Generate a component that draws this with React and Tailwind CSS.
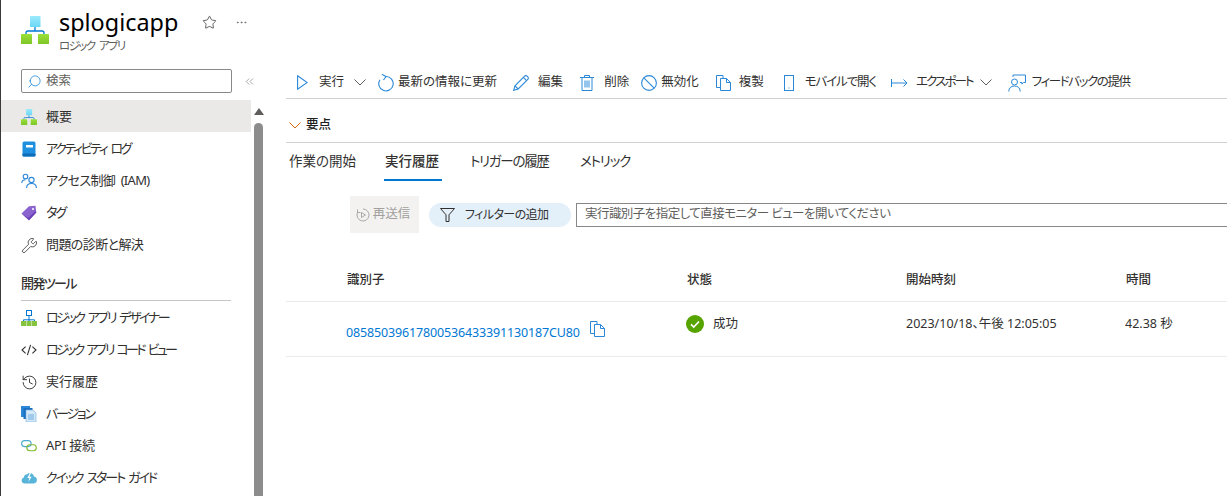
import React from 'react';
import { Star, Ellipsis, ChevronsLeft, Search, Wrench, History } from 'lucide-react';

const blue = '#0078d4';
const iconBlue = '#2b88d8';

const LogicIcon = ({ size = 28, id = 'a' }) => (
  <svg width={size} height={size} viewBox="0 0 28 28" className="shrink-0">
    <defs>
      <linearGradient id={`top-${id}`} x1="0" y1="0" x2="0" y2="1">
        <stop offset="0" stopColor="#9deafc" />
        <stop offset="1" stopColor="#6bd7f6" />
      </linearGradient>
      <linearGradient id={`bottom-${id}`} x1="0" y1="0" x2="0" y2="1">
        <stop offset="0" stopColor="#9ae03a" />
        <stop offset="1" stopColor="#7cc427" />
      </linearGradient>
    </defs>
    <path d="M14 11v4M5 19v-2a2 2 0 0 1 2-2h14a2 2 0 0 1 2 2v2" fill="none" stroke={blue} strokeWidth="1.3" />
    <rect x="9" y="0" width="10.500" height="11" rx="0.6" fill={`url(#top-${id})`} />
    <rect x="0" y="18" width="11" height="10.500" rx="0.6" fill={`url(#bottom-${id})`} />
    <rect x="17" y="18" width="11" height="10.500" rx="0.6" fill={`url(#bottom-${id})`} />
  </svg>
);

const LogIcon = () => (
  <svg width="14" height="16" viewBox="0 0 14 16" className="shrink-0">
    <rect x="0.5" y="0.5" width="13" height="15" rx="1.5" fill="#1f8fe0" />
    <rect x="0.5" y="12.5" width="13" height="3" rx="1" fill="#0f6cb8" />
    <rect x="4" y="4" width="7" height="2.5" fill="#fff" />
  </svg>
);

const PeopleIcon = () => (
  <svg width="16" height="16" viewBox="0 0 16 16" fill="none" stroke="#2a86d8" strokeWidth="1.1" className="shrink-0">
    <circle cx="4.500" cy="3.500" r="2.300" />
    <path d="M0.800 10c0-2 1.500-3.300 3.700-3.300" />
    <circle cx="10.500" cy="7" r="2.600" />
    <path d="M5.600 15c0-2.800 2-4.500 4.900-4.500s4.900 1.700 4.900 4.500" />
  </svg>
);

const TagIcon = () => (
  <svg width="16" height="16" viewBox="0 0 16 16" className="shrink-0">
    <path d="M0.500 8.500 8 1.200l6.500-.4.800 6.600L8 15.200z" fill="#8a63cf" />
    <path d="M0.500 8.500 8 15.200l7.300-7.800-1-1.200L7.300 13z" fill="#6a3fb5" />
    <circle cx="12" cy="4" r="1" fill="#fff" />
  </svg>
);

const DesignerIcon = () => (
  <svg width="16" height="16" viewBox="0 0 16 16" className="shrink-0">
    <path d="M8 6v3M2.500 12V9.800h11V12M8 9v3" fill="none" stroke={blue} strokeWidth="1" />
    <rect x="5.500" y="0.500" width="5" height="5" fill="#fff" stroke={blue} />
    <rect x="0" y="11" width="5" height="5" fill="#86c440" />
    <rect x="5.500" y="11" width="5" height="5" fill="#86c440" />
    <rect x="11" y="11" width="5" height="5" fill="#86c440" />
  </svg>
);

const CodeIcon = () => (
  <svg width="16" height="16" viewBox="0 0 16 16" fill="none" stroke="#323130" strokeWidth="1.100" className="shrink-0">
    <path d="M4.600 4.600 1 8l3.600 3.400M11.400 4.600 15 8l-3.600 3.400M9.600 2.800 6.400 13.200" />
  </svg>
);

const VersionIcon = () => (
  <svg width="16" height="16" viewBox="0 0 16 16" className="shrink-0">
    <rect x="0" y="0" width="9" height="11" fill="#2b88d8" />
    <rect x="2.500" y="2" width="9" height="11" fill="#1d6fc0" />
    <path d="M5 4h7l3 3v9H5z" fill="#d4e8f8" stroke="#72b3e8" strokeWidth="0.600" />
    <path d="M7 9h6M7 11h6M7 13h6" stroke="#5ea6de" strokeWidth="0.900" />
  </svg>
);

const ApiIcon = () => (
  <svg width="16" height="16" viewBox="0 0 16 16" fill="none" strokeWidth="1.100" className="shrink-0">
    <rect x="0.600" y="2.600" width="9.500" height="6" rx="3" stroke="#4aa9c9" />
    <rect x="5.800" y="6.800" width="9.500" height="6" rx="3" stroke="#7fba2e" />
  </svg>
);

const CloudIcon = () => (
  <svg width="16" height="16" viewBox="0 0 16 16" className="shrink-0">
    <path d="M3.400 13.500a3 3 0 0 1-.6-5.900 3.600 3.600 0 0 1 3.300-3.300A4 4 0 0 1 13 6.400a3.600 3.600 0 0 1-.2 7.100z" fill="#59b4d9" />
    <path d="M8.800 3 6.400 8h2l-1 4 3.200-5.200H8.400L10 3z" fill="#fff" />
  </svg>
);

const PlayIcon = () => (
  <svg width="11" height="15" viewBox="0 0 11 15" fill="none" stroke={iconBlue} strokeWidth="1.100" className="shrink-0">
    <path d="M.6.8 10.200 7.500.6 14.200z" />
  </svg>
);

const RefreshIcon = () => (
  <svg width="16" height="18" viewBox="0 0 16 18" fill="none" stroke={iconBlue} strokeWidth="1.100" className="shrink-0">
    <path d="M8 2.500a7.200 7.200 0 1 1-6 3.200" />
    <path d="M3.800.3 8 2.500 5.500 6" />
  </svg>
);

const PencilIcon = () => (
  <svg width="16" height="16" viewBox="0 0 16 16" fill="none" stroke={iconBlue} strokeWidth="1.100" className="shrink-0">
    <path d="M.7 15.300 2 10.800 11.600 1.200a1.800 1.800 0 0 1 2.600 0l.6.600a1.800 1.800 0 0 1 0 2.600L5.200 14z" />
    <path d="M2 10.800 5.200 14M10.400 2.400l3.200 3.200" />
  </svg>
);

const TrashIcon = () => (
  <svg width="14" height="16" viewBox="0 0 14 16" fill="none" stroke={iconBlue} strokeWidth="1" className="shrink-0">
    <path d="M0 2.500h14M4.500 2.500V.5h5v2M2 2.500v13h10v-13M5 5.500v7M7 5.500v7M9 5.500v7" />
  </svg>
);

const BanIcon = () => (
  <svg width="16" height="16" viewBox="0 0 16 16" fill="none" stroke={iconBlue} strokeWidth="1.100" className="shrink-0">
    <circle cx="8" cy="8" r="7.400" />
    <path d="M2.800 2.800 13.200 13.200" />
  </svg>
);

const CopyIcon = () => (
  <svg width="15" height="16" viewBox="0 0 15 16" fill="none" stroke={iconBlue} strokeWidth="1" className="shrink-0">
    <path d="M4.500 12.500h-4V.5H7v3" />
    <path d="M4.500 3.500h6l4 4v8h-10z" />
    <path d="M10.500 3.500v4h4" />
  </svg>
);

const MobileIcon = () => (
  <svg width="10" height="16" viewBox="0 0 10 16" fill="none" stroke={iconBlue} strokeWidth="1" className="shrink-0">
    <rect x="0.500" y="0.500" width="9" height="15" />
    <path d="M4.500 13h1" />
  </svg>
);

const ExportIcon = () => (
  <svg width="17" height="10" viewBox="0 0 17 10" fill="none" stroke={iconBlue} strokeWidth="1" className="shrink-0">
    <path d="M0.500 1v8M1 5h15M12.500 1.500 16 5l-3.500 3.500" />
  </svg>
);

const FeedbackIcon = () => (
  <svg width="18" height="18" viewBox="0 0 18 18" fill="none" stroke={iconBlue} strokeWidth="1" className="shrink-0">
    <path d="M5 3V1h12.500v7.500h-2l-1.600 1.600V8.500H12" />
    <circle cx="6.500" cy="8" r="3" />
    <path d="M.8 17.500c0-3.500 2.200-5.500 5.700-5.500s5.700 2 5.700 5.500" />
  </svg>
);

const FilterIcon = () => (
  <svg width="15" height="14" viewBox="0 0 15 14" fill="none" stroke="#323130" strokeWidth="1" className="shrink-0">
    <path d="M.5.500h14L9 6.800v6.700H6V6.800z" />
  </svg>
);

const ChevronIcon = ({ color = '#605e5c' }) => (
  <svg width="12" height="7" viewBox="0 0 12 7" fill="none" stroke={color} strokeWidth="1" className="shrink-0">
    <path d="M.5.500 6 6 11.500.5" />
  </svg>
);

const menuTop = [
  { label: '概要', icon: <LogicIcon size={16} id="b" />, active: true },
  { label: 'アクティビティ ログ', icon: <LogIcon />, text: 'tracking-[-2.4px] [word-spacing:3px]' },
  { label: 'アクセス制御 (IAM)', icon: <PeopleIcon />, text: 'tracking-[-0.7px] [word-spacing:3px]' },
  { label: 'タグ', icon: <TagIcon />, text: 'tracking-[-2px]' },
  { label: '問題の診断と解決', icon: <Wrench size={17} strokeWidth={1.1} color="#323130" className="shrink-0" />, text: 'tracking-[-0.6px]' },
];

const menuDev = [
  { label: 'ロジック アプリ デザイナー', icon: <DesignerIcon />, text: 'tracking-[-2.4px] [word-spacing:3px]' },
  { label: 'ロジック アプリ コード ビュー', icon: <CodeIcon />, text: 'tracking-[-2.7px] [word-spacing:3px]' },
  { label: '実行履歴', icon: <History size={17} strokeWidth={1.3} color="#323130" className="shrink-0" /> },
  { label: 'バージョン', icon: <VersionIcon />, text: 'tracking-[-2.2px]' },
  { label: 'API 接続', icon: <ApiIcon />, text: 'tracking-[-0.2px]' },
  { label: 'クイック スタート ガイド', icon: <CloudIcon />, text: 'tracking-[-2.15px] [word-spacing:3px]' },
];

const MenuItem = ({ item }) => (
  <div className={`flex h-8 items-center gap-[9px] pl-5 pt-[2px] text-[13px] text-[#323130] ${item.active ? 'bg-[#ebe9e8]' : ''}`}>
    <span className="flex w-4 justify-center">{item.icon}</span>
    <span className={`whitespace-nowrap ${item.text || ''}`}>{item.label}</span>
  </div>
);

const ToolItem = ({ icon, label, className = '', gapClass = '', text = '' }) => (
  <div className={`flex items-center whitespace-nowrap ${className} ${gapClass}`}>
    {icon}
    <span className={text}>{label}</span>
  </div>
);

export default function App() {
  return (
    <div className="flex h-[496px] w-[1227px] overflow-hidden border-l border-[#3a3a3a] bg-white text-[#323130] [font-family:'Noto_Sans','Noto_Sans_CJK_JP',sans-serif] [font-feature-settings:'palt']">
      <aside className="flex w-[285px] shrink-0 flex-col">
        <header className="flex h-[64px] shrink-0 pl-5 pt-4">
          <LogicIcon />
          <div className="ml-[10px] -mt-[10px]">
            <div className="text-[23.4px] leading-[32px] text-black">splogicapp</div>
            <div className="pt-px text-[11.5px] leading-[14px] tracking-[-1.6px] [word-spacing:3px] text-[#605e5c]">ロジック アプリ</div>
          </div>
          <Star size={15} strokeWidth={1.2} color="#323130" className="ml-[24px] -mt-[1px]" />
          <Ellipsis size={13} strokeWidth={1.2} color="#605e5c" className="ml-[18px]" />
        </header>

        <div className="flex h-[36px] shrink-0 items-start pl-5 pt-[5px]">
          <div className="flex h-6 w-[211px] items-center gap-1 rounded-[2px] border border-[#8a8886] pl-[5px] text-[12.5px] text-[#605e5c]">
            <Search size={15} strokeWidth={1.1} color={blue} className="-scale-x-100" />
            <span>検索</span>
          </div>
          <ChevronsLeft size={13} strokeWidth={1} color="#605e5c" className="ml-[11px] mt-[6px]" />
        </div>

        <div className="flex min-h-0 flex-1">
          <nav className="w-[250px] shrink-0">
            {menuTop.map((item) => (
              <MenuItem key={item.label} item={item} />
            ))}
            <div className="ml-5 mt-[7px] w-[210px] border-b border-[#c8c6c4] pb-2 pt-[7px] text-[13px] leading-[18px] font-medium tracking-[-1.6px]">
              開発ツール
            </div>
            {menuDev.map((item) => (
              <MenuItem key={item.label} item={item} />
            ))}
          </nav>
          <div className="ml-[3px] flex w-[9px] flex-col items-center">
            <div className="mt-2 h-0 w-0 border-x-[5px] border-b-[7px] border-x-transparent border-b-[#605e5c]" />
            <div className="mt-2 w-[9px] flex-1 rounded-t-full bg-[#8c8c8c]" />
          </div>
        </div>
      </aside>

      <main className="min-w-0 flex-1">
        <div className="flex h-[99px] items-end">
          <div className="flex h-[35px] w-full items-center border-b border-[#d0d0d0] pl-[11px] pt-[3px] text-[12.5px] text-[#323130]">
            <ToolItem icon={<PlayIcon />} label="実行" gapClass="gap-[11px]" />
            <span className="ml-[10px]"><ChevronIcon /></span>
            <ToolItem className="ml-3" icon={<RefreshIcon />} label="最新の情報に更新" gapClass="gap-1" />
            <ToolItem className="ml-4" icon={<PencilIcon />} label="編集" gapClass="gap-[9px]" />
            <ToolItem className="ml-[17px]" icon={<TrashIcon />} label="削除" gapClass="gap-[10px]" />
            <ToolItem className="ml-3" icon={<BanIcon />} label="無効化" gapClass="gap-1" />
            <ToolItem className="ml-[17px]" icon={<CopyIcon />} label="複製" gapClass="gap-2" />
            <ToolItem className="ml-5" icon={<MobileIcon />} label="モバイルで開く" gapClass="gap-[11px]" text="tracking-[-1.1px]" />
            <ToolItem className="ml-[15px]" icon={<ExportIcon />} label="エクスポート" gapClass="gap-2" text="tracking-[-1.9px]" />
            <span className="ml-[7px]"><ChevronIcon /></span>
            <ToolItem className="ml-4" icon={<FeedbackIcon />} label="フィードバックの提供" gapClass="gap-[6px]" text="tracking-[-1.4px]" />
          </div>
        </div>

        <div className="flex h-[44px] items-center gap-[5px] border-b border-[#d0d0d0] pl-[3px] pt-[10px] text-[12.5px] font-medium text-[#201f1e]">
          <ChevronIcon color="#d9660a" />
          <span>要点</span>
        </div>

        <div className="flex h-[38px] items-start pl-[3px] pt-[8px] text-[13.5px] leading-[20px] text-[#323130]">
          <span className="w-[95px]">作業の開始</span>
          <span className="h-[30px] w-[58px] border-b-2 border-[#0078d4] pl-px font-medium">実行履歴</span>
          <span className="ml-[28px] w-[110px] tracking-[-1.3px]">トリガーの履歴</span>
          <span className="tracking-[-1.2px]">メトリック</span>
        </div>

        <div className="mt-[15px] flex h-[37px] items-center pl-[64px]">
          <div className="flex h-[37px] w-[69px] items-center justify-center gap-[3px] bg-[#f3f2f1] pr-[3px] text-[12.5px] text-[#a19f9d]">
            <svg width="14" height="14" viewBox="0 0 14 14" fill="none" stroke="#a19f9d" strokeWidth="0.9">
              <path d="M7 1a6 6 0 1 1-5.500 3.600M1.500 1.500v3h3" />
              <path d="M5.500 4.500v5L9.500 7z" />
            </svg>
            <span>再送信</span>
          </div>
          <div className="ml-[10px] flex h-6 w-[142px] items-center gap-[10px] rounded-full bg-[#e3eff9] pl-[11px] text-[12px] tracking-[-0.6px] text-[#323130]">
            <FilterIcon />
            <span>フィルターの追加</span>
          </div>
          <div className="ml-[5px] -mr-2 flex h-6 flex-1 items-center border border-[#8a8886] pl-2 text-[12.5px] tracking-[-0.55px] whitespace-nowrap text-[#605e5c]">
            実行識別子を指定して直接モニター ビューを開いてください
          </div>
        </div>

        <div className="mt-[26px] grid h-[43px] grid-cols-[340px_219px_220px_1fr] items-center border-b border-[#edebe9] pl-[61px] text-[12.5px] font-medium">
          <span>識別子</span>
          <span>状態</span>
          <span>開始時刻</span>
          <span>時間</span>
        </div>

        <div className="grid h-[55px] grid-cols-[340px_219px_220px_1fr] items-start border-b border-[#edebe9] pl-[60px] text-[12.5px]">
          <div className="flex items-start pt-[19px]">
            <span className="mt-[3px] tracking-[-0.15px] text-[#0078d4]">08585039617800536433391130187CU80</span>
            <span className="ml-[10px]"><CopyIcon /></span>
          </div>
          <div className="flex items-center gap-[9px] pt-[13px]">
            <svg width="18" height="18" viewBox="0 0 18 18" className="shrink-0">
              <circle cx="9" cy="9" r="9" fill="#57a300" />
              <path d="M5 9.300 7.800 12 13 6.500" fill="none" stroke="#fff" strokeWidth="1.700" />
            </svg>
            <span>成功</span>
          </div>
          <span className="pl-px pt-[12px] leading-[20px]">2023/10/18、午後 12:05:05</span>
          <span className="pt-[12px] leading-[20px]">42.38 秒</span>
        </div>
      </main>
    </div>
  );
}
